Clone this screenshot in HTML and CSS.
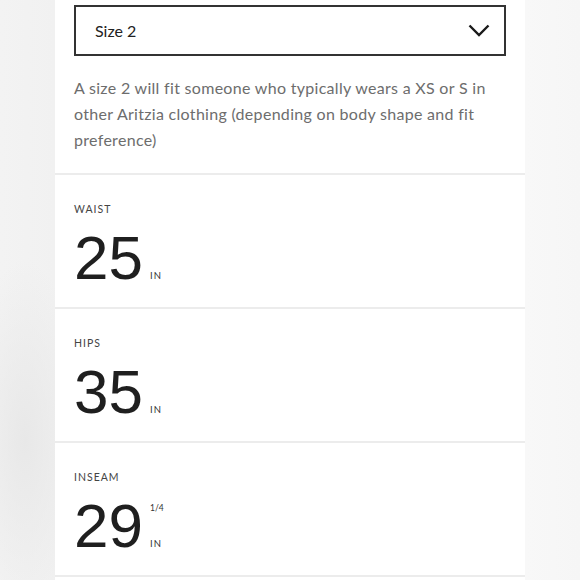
FILE: index.html
```html
<!DOCTYPE html>
<html>
<head>
<meta charset="utf-8">
<link rel="stylesheet" href="styles.css">
</head>
<body>
<div class="panel">
  <div class="intro">
    <div class="select">
      <span class="select-value">Size 2</span>
      <svg class="chevron" width="22" height="13" viewBox="0 0 22 13"><path d="M1.5 1.5 L11 11 L20.5 1.5" fill="none" stroke="#1a1a1a" stroke-width="2.4"/></svg>
    </div>
    <p class="note">A size 2 will fit someone who typically wears a XS or S in other Aritzia clothing (depending on body shape and fit preference)</p>
  </div>
  <div class="measure">
    <div class="label">WAIST</div>
    <div class="row">
      <span class="num">25</span>
      <span class="unit"><span class="in">IN</span></span>
    </div>
  </div>
  <div class="measure">
    <div class="label">HIPS</div>
    <div class="row">
      <span class="num">35</span>
      <span class="unit"><span class="in">IN</span></span>
    </div>
  </div>
  <div class="measure">
    <div class="label">INSEAM</div>
    <div class="row">
      <span class="num">29</span>
      <span class="unit"><span class="frac">1/4</span><span class="in">IN</span></span>
    </div>
  </div>
  <div class="end"></div>
</div>
</body>
</html>
```
FILE: styles.css
```css
html, body {
  margin: 0;
  padding: 0;
  height: 580px;
  overflow: hidden;
}
body {
  background:
    radial-gradient(ellipse 60px 180px at 25px 440px, #e8e8e8, rgba(232,232,232,0)),
    linear-gradient(to right, #f3f3f3 0px, #f1f1f1 55px, #f8f8f8 525px, #f6f6f6 580px);
  font-family: "Lato", "Liberation Sans", sans-serif;
}
.panel {
  margin-left: 55px;
  width: 470px;
  height: 580px;
  background: #fff;
}
.intro {
  padding: 5px 19px 20px;
}
.select {
  height: 51px;
  box-sizing: border-box;
  border: 2px solid #333;
  display: flex;
  align-items: center;
  justify-content: space-between;
  padding: 0 14px 0 19px;
}
.select-value {
  font-size: 16px;
  color: #222;
}
.note {
  margin: 19px 0 0;
  font-size: 16px;
  line-height: 26px;
  color: #6d6d6d;
  letter-spacing: 0.3px;
}
.measure {
  border-top: 2px solid #ececec;
  height: 134px;
  box-sizing: border-box;
  padding: 28px 19px 0;
}
.end {
  border-top: 2px solid #ececec;
}
.label {
  font-size: 10.5px;
  line-height: 12px;
  letter-spacing: 1px;
  color: #444;
}
.row {
  display: flex;
  margin-top: 12px;
  height: 62px;
}
.num {
  font-family: "Liberation Sans", Arial, sans-serif;
  font-size: 62px;
  line-height: 62px;
  color: #1f1f1f;
}
.unit {
  display: flex;
  flex-direction: column;
  margin-left: 7px;
  padding: 8px 0 8px;
}
.frac {
  font-size: 8.5px;
  line-height: 10px;
  color: #333;
}
.in {
  margin-top: auto;
  font-size: 9.5px;
  line-height: 10px;
  letter-spacing: 1px;
  color: #333;
}
```
